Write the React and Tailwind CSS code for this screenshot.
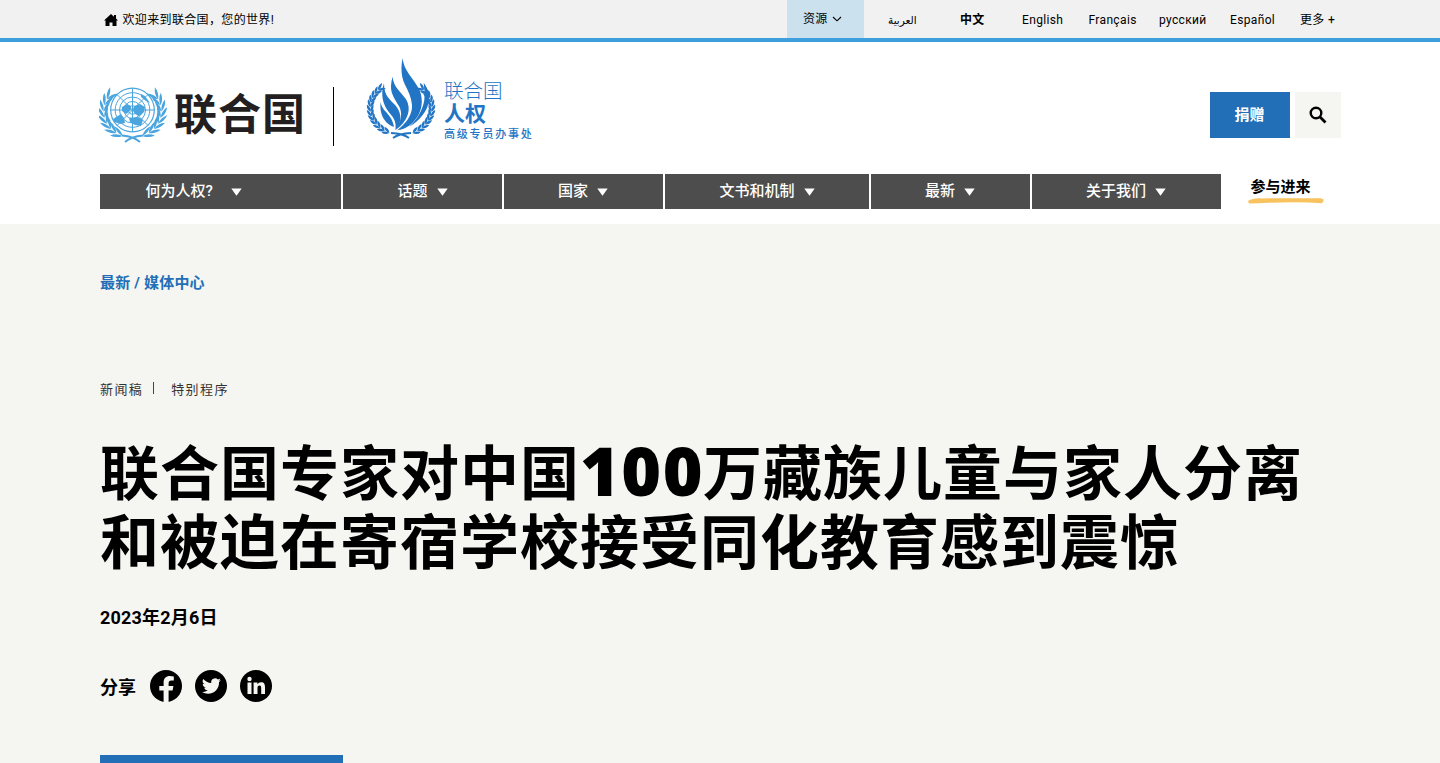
import React from "react";

const SANS = "font-[Roboto,'Noto_Sans_CJK_SC',sans-serif]";

function leaves(cx, cy, rx, ry, from, to, count) {
  const out = [];
  for (let i = 0; i < count; i++) {
    const deg = from + ((to - from) * i) / (count - 1);
    const a = (deg * Math.PI) / 180;
    const x = cx + rx * Math.cos(a);
    const y = cy + ry * Math.sin(a);
    const heading = (Math.atan2(ry * Math.cos(a), -rx * Math.sin(a)) * 180) / Math.PI;
    out.push({ x, y, r: heading - 16 });
    out.push({ x, y, r: heading + 32 });
  }
  return out;
}

function Laurel({ cx, cy, rx, ry, from, to, count, length, width, color }) {
  const items = leaves(cx, cy, rx, ry, from, to, count);
  const half = (
    <g fill={color}>
      {items.map((l, i) => (
        <path
          key={i}
          d={`M0 0Q${length / 2} ${-width} ${length} 0Q${length / 2} ${width} 0 0`}
          transform={`translate(${l.x} ${l.y}) rotate(${l.r})`}
        />
      ))}
    </g>
  );
  return (
    <>
      {half}
      <g transform={`translate(${cx * 2} 0) scale(-1 1)`}>{half}</g>
    </>
  );
}

function UnEmblem() {
  const c = "#4aa5de";
  return (
    <svg width="68" height="58" viewBox="0 0 68 58" className="block">
      <Laurel cx={33.5} cy={25.5} rx={29} ry={26} from={110} to={208} count={8} length={12.5} width={2.8} color={c} />
      <g fill="none" stroke={c} strokeWidth="1">
        <circle cx="33.500" cy="24" r="21.800" strokeWidth="1.200" />
        <circle cx="33.500" cy="24" r="17.300" />
        <circle cx="33.500" cy="24" r="13" />
        <circle cx="33.500" cy="24" r="8.500" />
        <circle cx="33.500" cy="24" r="4.200" />
        <path d="M33.500 2.400V45.600M11.900 24H55.100M18.200 8.700L48.800 39.300M48.800 8.700L18.200 39.300" />
        <path d="M26 56Q32 50.500 44 49.500M41 56Q35 50.500 23 49.500" strokeWidth="1.800" />
      </g>
      <g fill={c}>
        <path d="M23 21l5-3 4 2 0 3-2 3-3 2-4-3zM35 20l6-2 5 3-1 5-4 4-5-2-2-4zM42 8l4 2 5 7-4-2-5-4zM14 33l8-5 3 4 1 5-4 1-7-2zM30 32l9-1 5 3-2 6-6-1-5-3z" />
      </g>
    </svg>
  );
}

function OhchrEmblem() {
  const c = "#2275c4";
  return (
    <svg width="72" height="84" viewBox="0 0 72 84" className="block">
      <Laurel cx={35} cy={50} rx={31} ry={27} from={112} to={222} count={12} length={8} width={2.6} color={c} />
      <path d="M27 80Q33 75.500 45 75M43 80Q37 75.500 25 75" fill="none" stroke={c} strokeWidth="1.800" />
      <g fill={c} transform="translate(-46 -8) scale(0.3333)">
        <path d="M248 24C250 60 280 85 296 115C316 156 302 196 274 222Q256 238 232 241C256 222 278 196 276 166C274 140 264 122 255 104C243 80 242 50 248 24Z" />
        <path d="M311 98C326 118 330 136 326 156C322 182 300 212 268 230C292 208 308 180 313 150Q316 122 311 98Z" />
        <path d="M218 80C220 112 244 126 258 148C276 178 264 214 226 241C244 212 248 190 238 170C226 150 212 132 213 108Q213 94 218 80Z" />
        <path d="M192 100C192 140 212 150 228 168C248 194 244 220 226 240C230 216 222 204 208 188C190 168 180 134 192 100Z" />
        <path d="M182 155C184 184 216 190 222 230C204 226 176 202 182 155Z" />
      </g>
    </svg>
  );
}

const NAV = [
  { label: "何为人权?", box: "w-[241px] pl-[45.5px]", gap: "gap-[18px]" },
  { label: "话题", box: "w-[159px] pl-[54.5px]", gap: "gap-[9px]" },
  { label: "国家", box: "w-[159px] pl-[54px]", gap: "gap-[9px]" },
  { label: "文书和机制", box: "w-[204px] pl-[54.5px]", gap: "gap-[9px]" },
  { label: "最新", box: "w-[159px] pl-[54px]", gap: "gap-[9px]" },
  { label: "关于我们", box: "w-[189px] pl-[54px]", gap: "gap-[9px]" },
];

function TopBar() {
  return (
    <div className="flex h-[42px] border-b-4 border-[#3d9fdc] bg-[#f1f1f1] text-xs leading-[38px] text-black">
      <div className="flex w-[787px] items-center pl-[104px] pt-px">
        <svg width="14" height="12" viewBox="0 0 14 12" className="mr-[4.5px]">
          <path d="M7 0L0 6.500H1.500V12H5.500V8.500H8.500V12H12.500V6.500H14L12 4.500V1H10V2.800Z" />
        </svg>
        <span className="tracking-[0.35px]">欢迎来到联合国，您的世界!</span>
      </div>
      <div className="flex w-[77px] items-center bg-[#cbe1ee] pl-4">
        <span className="tracking-[0.2px]">资源</span>
        <svg width="10" height="6" viewBox="0 0 10 6" className="ml-[5px]">
          <path d="M1 1L5 4.800L9 1" fill="none" stroke="black" strokeWidth="1.100" />
        </svg>
      </div>
      <div className="flex pt-px tracking-[0.35px]">
        <span className="w-24 pl-6 font-['DejaVu_Sans'] text-[10.5px] tracking-normal">العربية</span>
        <span className="w-[62px] font-bold tracking-[0.2px]">中文</span>
        <span className="w-[66.5px]">English</span>
        <span className="w-[70.5px]">Français</span>
        <span className="w-[71px]">русский</span>
        <span className="w-[70px]">Español</span>
        <span>更多 +</span>
      </div>
    </div>
  );
}

function Header() {
  return (
    <header className="h-[182px] bg-white px-[100px]">
      <div className="flex h-[132px]">
        <div className="flex w-[234px] pt-[44px]">
          <div className="-ml-px"><UnEmblem /></div>
          <span className="ml-[7px] mt-[6px] text-[43px] leading-[46px] font-bold tracking-[1px] whitespace-nowrap text-[#231f20]">联合国</span>
        </div>
        <div className="-ml-px mt-[45px] h-[59px] w-px bg-black" />
        <div className="ml-8 flex pt-4">
          <OhchrEmblem />
          <div className="ml-[6px] flex flex-col pt-[23px] text-[#2275c4]">
            <span className="text-[19.5px] leading-[22px] font-light">联合国</span>
            <span className="text-[21px] leading-[22px] font-bold">人权</span>
            <span className="text-[11px] leading-5 tracking-[1.800px] font-medium">高级专员办事处</span>
          </div>
        </div>
        <div className="ml-auto mr-[-1px] flex gap-[5px] pt-[50px]">
          <button className="flex h-[46px] w-20 items-center justify-center bg-[#226fb7] pr-px text-[15px] font-bold text-white">捐赠</button>
          <button className="flex size-[46px] items-center justify-center bg-[#f5f5f1]">
            <svg width="18" height="18" viewBox="0 0 18 18" fill="none" stroke="black" className="-ml-px">
              <circle cx="7" cy="7" r="5.300" strokeWidth="2.400" />
              <path d="M10.800 10.800L16.500 16.500" strokeWidth="2.800" />
            </svg>
          </button>
        </div>
      </div>
      <nav className="flex gap-[2px] text-[15px] font-medium text-white">
        {NAV.map((n) => (
          <a key={n.label} className={`flex h-[35px] items-center bg-[#4d4d4d] ${n.box} ${n.gap}`}>
            <span className="whitespace-nowrap">{n.label}</span>
            <svg width="11" height="8" viewBox="0 0 11 8" fill="white"><path d="M0.300 0.500H10.700L5.500 7.800Z" /></svg>
          </a>
        ))}
        <a className="ml-[25px] flex flex-col text-black">
          <span className="pl-[2.5px] pt-px font-bold leading-6">参与进来</span>
          <svg width="76" height="6" viewBox="0 0 76 6" className="-mt-px">
            <path d="M0 3Q5 0 13 .4L73 .2L76 1.800L74 5.200Q52 3.500 21 4.700Q9 5 1 5.600Z" fill="#f8c25f" />
          </svg>
        </a>
      </nav>
    </header>
  );
}

function Share() {
  return (
    <div className="flex items-center">
      <span className="w-[50px] pt-[3px] text-[18px] font-bold">分享</span>
      <div className="flex gap-[13px]">
        <svg width="32" height="32" viewBox="0 0 32 32">
          <circle cx="16" cy="16" r="16" />
          <path fill="#f5f5f1" d="M13.600 32V20.600H9.300V16H13.600V12.500C13.600 8.300 16 6 19.800 6Q22 6 23.800 6.400V10.400H21.500C19.300 10.400 18.600 11.700 18.600 13.200V16H23.400L22.600 20.600H18.600V32Z" />
        </svg>
        <svg width="32" height="32" viewBox="0 0 32 32">
          <circle cx="16" cy="16" r="16" />
          <path fill="#f5f5f1" transform="translate(7 6.5) scale(0.790)" d="M23.950 4.570a10 10 0 0 1-2.820.77 4.960 4.960 0 0 0 2.160-2.720c-.95.550-2 .95-3.130 1.180a4.920 4.920 0 0 0-8.380 4.480C7.690 8.090 4.070 6.130 1.640 3.160a4.920 4.920 0 0 0 1.520 6.570 4.900 4.900 0 0 1-2.230-.61v.06a4.920 4.920 0 0 0 3.950 4.830 5 5 0 0 1-2.210.080 4.940 4.940 0 0 0 4.600 3.420A9.870 9.870 0 0 1 0 19.540a13.990 13.990 0 0 0 7.550 2.210c9.050 0 14-7.500 14-13.980 0-.21 0-.42-.020-.63a9.940 9.940 0 0 0 2.420-2.570z" />
        </svg>
        <svg width="32" height="32" viewBox="0 0 32 32">
          <circle cx="16" cy="16" r="16" />
          <g fill="#f5f5f1">
            <circle cx="9.500" cy="9" r="2.200" />
            <path d="M7.500 12.500H11.500V24H7.500ZM13.600 12.500H17.400V14.200C18.200 12.900 19.500 12.200 21.100 12.200C24.300 12.200 25 14.300 25 17.200V24H21.200V18C21.200 16.500 20.900 15.500 19.500 15.500C18 15.500 17.500 16.600 17.500 18V24H13.600Z" />
          </g>
        </svg>
      </div>
    </div>
  );
}

export default function App() {
  return (
    <div className={`h-[763px] w-[1440px] overflow-hidden bg-[#f5f5f1] text-black ${SANS}`} lang="zh-CN">
      <TopBar />
      <Header />
      <main className="px-[100px] pt-[47px]">
        <div className="h-6 text-[15px] leading-6 font-bold tracking-[0.200px] text-[#226fb7]">最新 / 媒体中心</div>
        <div className="mt-[83px] flex h-5 items-center text-[13px] tracking-[1.400px] text-[#333]">
          <span className="pt-[3px]">新闻稿</span>
          <span className="mx-[10px] h-3 w-px bg-[#444]" />
          <span className="ml-[7px] pt-[3px]">特别程序</span>
        </div>
        <h1 className="mt-[42px] text-[59px] leading-[69px] font-bold tracking-[1px] whitespace-nowrap">
          <div className="flex h-[69px]">
            <span>联合国专家对中国</span>
            <span className="-mt-[5px] w-[123px] font-['Open_Sans'] text-[68px] font-extrabold tracking-[1.500px]">100</span>
            <span>万藏族儿童与家人分离</span>
          </div>
          <div className="h-[69px]">和被迫在寄宿学校接受同化教育感到震惊</div>
        </h1>
        <div className="mt-[26px] text-[18px] leading-7 font-bold tracking-[0.200px]">2023年2月6日</div>
        <div className="mt-[38px]"><Share /></div>
        <div className="mt-[53px] h-2 w-[243px] bg-[#226fb7]" />
      </main>
    </div>
  );
}
